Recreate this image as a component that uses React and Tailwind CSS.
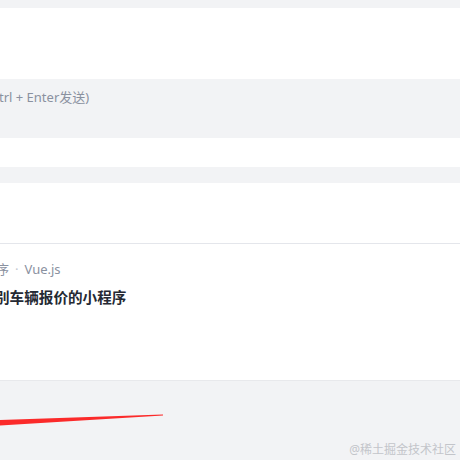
export default function App() {
  const font = { fontFamily: '"Noto Sans", "Noto Sans CJK SC", sans-serif' };
  return (
    <div className="w-[460px] h-[460px] overflow-hidden bg-[#f2f3f5]" style={font}>
      <div className="h-[8px]" />
      <div className="h-[71px] bg-white" />
      <div className="h-[59px] bg-[#f2f3f5] pt-[8px]">
        <div className="text-[13px] leading-[20px] text-[#8a919f] whitespace-nowrap ml-[-1px]">trl + Enter发送)</div>
      </div>
      <div className="h-[29px] bg-white" />
      <div className="h-[16px] bg-[#f2f3f5]" />
      <div className="h-[61px] bg-white border-b border-[#e4e6eb]" />
      <div className="h-[136px] bg-white pt-[15px]">
        <div className="flex items-center text-[13px] leading-[20px] text-[#8a919f] whitespace-nowrap">
          <span className="ml-[-4px]">序</span>
          <span className="mx-[6px] text-[#c2c8d1]">·</span>
          <span>Vue.js</span>
        </div>
        <div className="mt-[7px] text-[14.6px] leading-[22px] font-bold text-[#252933] whitespace-nowrap ml-[-5px]">别车辆报价的小程序</div>
      </div>
      <div className="relative h-[80px] bg-[#f2f3f5] border-t border-[#e8e9ec]">
        <svg className="absolute left-0 top-0" width="460" height="80" viewBox="0 0 460 80">
          <polygon points="0,39 163,33.6 163,34.6 0,44.5" fill="#fb2a2a" />
        </svg>
        <div className="absolute right-[4px] bottom-[2px] text-[12px] leading-[16px] text-[#c3c5ca] whitespace-nowrap">@稀土掘金技术社区</div>
      </div>
    </div>
  );
}
